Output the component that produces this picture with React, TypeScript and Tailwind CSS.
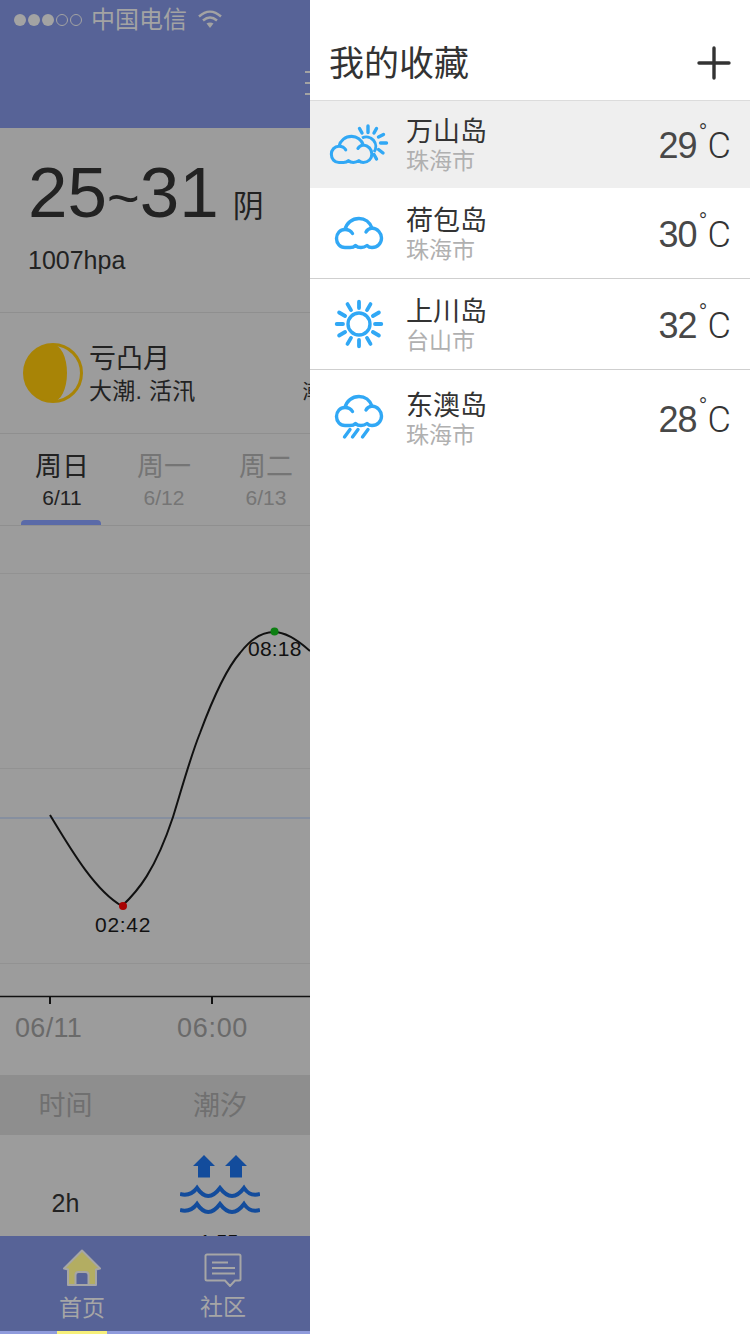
const FONT = "font-['Liberation_Sans','Noto_Sans_CJK_SC',sans-serif]";

const blue = "#31a8f5";

function CloudPath() {
  return (
    <path d="M10 30.500C5 30.500 1.500 26.500 1.500 21.500C1.500 16.500 5 12.500 10 12.500C11.500 6 17 1.500 24 1.500C30 1.500 35 5.500 37 11C42.500 11.500 46.500 16 46.500 21C46.500 26.500 42.500 30.500 37 30.500C35 30.500 33.500 30 32 28.500C30 30 28 30.500 26 30.500C24 30.500 22 30 20.500 28.500C19 30 17 30.500 15 30.500C13 30.500 11.500 30.500 10 30.500zM10 12.500C13 12.500 16 14 17.500 16.500M37 11C34 11.500 32 13 31 15" fill="none" stroke={blue} strokeWidth="3.400" strokeLinecap="round" strokeLinejoin="round" />
  );
}

function PartlyCloudy() {
  return (
    <svg width="58" height="40" viewBox="0 0 58 40" className="overflow-visible">
      <path d="M32 13A9.500 9.500 0 0 1 44 27" fill="none" stroke={blue} strokeWidth="3" />
      <g transform="translate(0 10) scale(0.9)"><CloudPath /></g>
      <g stroke={blue} strokeWidth="3.400" strokeLinecap="round">
        <path d="M29.500 3.500l2.500 4.500M38 1v6.500M46.500 3.500L44 8M53.500 9.500L48.500 12M56.500 18H50.500M53 28l-4.500-3.500M46.500 34L44 29.500" />
      </g>
    </svg>
  );
}

function Cloud() {
  return (
    <svg width="48" height="32" viewBox="0 0 48 32" className="overflow-visible">
      <CloudPath />
    </svg>
  );
}

function Sun() {
  return (
    <svg width="50" height="50" viewBox="0 0 50 50">
      <circle cx="25" cy="25" r="11" fill="none" stroke={blue} strokeWidth="3.400" />
      <g stroke={blue} strokeWidth="3.800" strokeLinecap="round">
        <path d="M25 2.700V9M25 41V47.300M2.700 25H9M41 25H47.300M36.500 5.100L33 11.100M13.500 5.100L17 11.100M36.500 44.900L33 38.900M13.500 44.900L17 38.900M44.900 13.500L38.900 17M5.100 13.500L11.100 17M44.900 36.500L38.900 33M5.100 36.500L11.100 33" />
      </g>
    </svg>
  );
}

function Rain() {
  return (
    <svg width="48" height="44" viewBox="0 0 48 44" className="-mt-[3px] overflow-visible">
      <CloudPath />
      <g stroke={blue} strokeWidth="3.400" strokeLinecap="round">
        <path d="M15 34.500L9.500 42M23 34.500L17.500 42M33 34.500L27.500 42" />
      </g>
    </svg>
  );
}

const items = [
  { name: "万山岛", city: "珠海市", temp: "29", h: "h-[87px]", bg: "bg-[#efefef]", icon: <PartlyCloudy />, border: false },
  { name: "荷包岛", city: "珠海市", temp: "30", h: "h-[91px]", bg: "bg-white", icon: <Cloud />, border: true },
  { name: "上川岛", city: "台山市", temp: "32", h: "h-[91px]", bg: "bg-white", icon: <Sun />, border: true },
  { name: "东澳岛", city: "珠海市", temp: "28", h: "h-[96px]", bg: "bg-white", icon: <Rain />, border: false },
];

function Row({ item }: { item: (typeof items)[number] }) {
  return (
    <div className={`${item.h} ${item.bg} ${item.border ? "border-b border-[#cfcfcf]" : ""} flex items-center pl-[19px] pr-[19px]`}>
      <div className="w-[60px] flex justify-center">{item.icon}</div>
      <div className="ml-[17px] mt-[4px] flex flex-col flex-1">
        <span className="text-[27px] leading-[30px] text-[#333333]">{item.name}</span>
        <span className="text-[23px] leading-[29px] text-[#b0b0b0]">{item.city}</span>
      </div>
      <div className="flex items-start mt-[3px] text-[36px] leading-[40px] text-[#484848]">
        <span className="tracking-[-1px]">{item.temp}</span>
        <span className="text-[24px] leading-[24px] -mt-[5px] ml-[2px] font-['Roboto',sans-serif] font-light text-[#333333]">°</span>
        <span className="font-['Roboto',sans-serif] font-light text-[#333333]">C</span>
      </div>
    </div>
  );
}

function Chart() {
  return (
    <svg width="310" height="549" viewBox="0 0 310 549" className="block">
      <path d="M0 47.500H310M0 242.500H310M0 437.500H310" stroke="#929292" strokeWidth="1" />
      <path d="M0 292H310" stroke="#7f8ba0" strokeWidth="1.500" />
      <path
        d="M50 289C70 322 95 365 122 380C138 365 155 345 173 291C182 262 190 232 200 207C213 172 226 143 240 127C250 114 262 106 274 106C287 106 300 116 310 125"
        fill="none"
        stroke="#111"
        strokeWidth="2"
      />
      <circle cx="123" cy="380" r="4" fill="#a80404" />
      <circle cx="274.500" cy="105.500" r="4" fill="#0d7f12" />
      <path d="M0 470.500H310" stroke="#111" strokeWidth="1.500" />
      <path d="M50 470V478M212 470V478" stroke="#111" strokeWidth="2" />
    </svg>
  );
}

export default function App() {
  return (
    <div className={`${FONT} w-[750px] h-[1334px] flex overflow-hidden bg-white`}>
      <div className="w-[310px] h-full flex flex-col bg-[#9c9c9c] overflow-hidden relative">
        <header className="h-[128px] shrink-0 bg-[#576397] flex flex-col">
          <div className="h-[40px] flex items-center pl-[14px] text-[24px] text-[#a3a3a3]">
            <div className="flex items-center gap-[2px]">
              <i className="w-[12px] h-[12px] rounded-full bg-[#a3a3a3]" />
              <i className="w-[12px] h-[12px] rounded-full bg-[#a3a3a3]" />
              <i className="w-[12px] h-[12px] rounded-full bg-[#a3a3a3]" />
              <i className="w-[12px] h-[12px] rounded-full border border-[#a3a3a3]" />
              <i className="w-[12px] h-[12px] rounded-full border border-[#a3a3a3]" />
            </div>
            <span className="ml-[9px] leading-[40px]">中国电信</span>
            <svg width="26" height="20" viewBox="0 0 26 20" className="ml-[10px] -mt-[2px]">
              <path d="M2 7.500C9 1 17 1 24 7.500M6 11.500c4.500-4 9.500-4 14 0" fill="none" stroke="#a3a3a3" strokeWidth="2.400" />
              <path d="M9.500 14.500c2-1.500 5-1.500 7 0L13 19z" fill="#a3a3a3" />
            </svg>
          </div>
          <div className="flex justify-end mt-[31px] -mr-[22px]">
            <span className="w-[27px] flex flex-col gap-[9px]">
              <i className="h-[2px] bg-[#a3a3a3]" />
              <i className="h-[2px] bg-[#a3a3a3]" />
              <i className="h-[2px] bg-[#a3a3a3]" />
            </span>
          </div>
        </header>

        <section className="h-[185px] shrink-0 border-b border-[#8f8f8f] pl-[28px] pt-[25px] text-[#222]">
          <div className="flex items-baseline h-[80px]">
            <span className="text-[71px] leading-[80px]">25<span className="text-[56px]">~</span>31</span>
            <span className="text-[31px] ml-[14px]">阴</span>
          </div>
          <div className="text-[25px] leading-[30px] mt-[12px]">1007hpa</div>
        </section>

        <section className="h-[121px] shrink-0 border-b border-[#8f8f8f] flex items-center pl-[23px] text-[#222] whitespace-nowrap">
          <svg width="60" height="60" viewBox="0 0 60 60" className="shrink-0 -mt-[1px]">
            <circle cx="30" cy="30" r="28.500" fill="none" stroke="#a88406" strokeWidth="3" />
            <path d="M30 1.500A28.500 28.500 0 0 0 30 58.500A14 28.500 0 0 0 30 1.500z" fill="#a88406" />
          </svg>
          <div className="ml-[6px] mt-[2px]">
            <div className="text-[27px] leading-[34px]">亏凸月</div>
            <div className="text-[23px] leading-[30px] tracking-[0.3px]">大潮. 活汛</div>
          </div>
          <span className="ml-[107px] mt-[37px] text-[20px] leading-[30px]">潮</span>
        </section>

        <section className="h-[92px] shrink-0 border-b border-[#8f8f8f] flex pl-[11px] relative">
          <div className="w-[102px] shrink-0 pt-[16px] flex flex-col items-center text-[#222]">
            <span className="text-[27px] leading-[34px]">周日</span>
            <span className="text-[21px] leading-[28px]">6/11</span>
          </div>
          <div className="w-[102px] shrink-0 pt-[16px] flex flex-col items-center text-[#757575]">
            <span className="text-[27px] leading-[34px]">周一</span>
            <span className="text-[21px] leading-[28px]">6/12</span>
          </div>
          <div className="w-[102px] shrink-0 pt-[16px] flex flex-col items-center text-[#757575]">
            <span className="text-[27px] leading-[34px]">周二</span>
            <span className="text-[21px] leading-[28px]">6/13</span>
          </div>
          <i className="absolute left-[21px] bottom-0 w-[80px] h-[5px] rounded-t-[4px] bg-[#5a6aa8]" />
        </section>

        <section className="h-[549px] shrink-0 relative">
          <Chart />
          <span className="absolute left-[95px] top-[387px] text-[21px] leading-[24px] tracking-[0.7px] text-[#111]">02:42</span>
          <span className="absolute left-[248px] top-[111px] text-[21px] leading-[24px] tracking-[0.2px] text-[#111]">08:18</span>
          <span className="absolute left-[15px] top-[487px] text-[27px] leading-[30px] tracking-[0.3px] text-[#6a6a6a]">06/11</span>
          <span className="absolute left-[177px] top-[487px] text-[27px] leading-[30px] tracking-[0.7px] text-[#6a6a6a]">06:00</span>
        </section>

        <section className="h-[60px] shrink-0 bg-[#8e8e8e] flex items-center text-[27px] text-[#707070] pt-[2px]">
          <span className="w-[131px] text-center">时间</span>
          <span className="w-[178px] text-center">潮汐</span>
        </section>

        <section className="h-[101px] shrink-0 flex overflow-hidden relative">
          <div className="w-[131px] flex justify-center pt-[51px] text-[25px] leading-[34px] text-[#222]">2h</div>
          <div className="w-[178px] flex flex-col items-center pt-[19px]">
            <svg width="80" height="64" viewBox="0 0 80 64" className="block shrink-0">
              <path d="M13 12L24 1 35 12H30V23.500H18V12zM45 12L56 1 67 12H62V23.500H50V12z" fill="#134c9c" strokeLinejoin="round" />
              <path d="M0 40Q10 43 17 34Q28 50 40 34Q52 50 64 34Q70 43 80 40M0 56Q10 59 17 50Q28 66 40 50Q52 66 64 50Q70 59 80 56" fill="none" stroke="#134c9c" strokeWidth="4" />
            </svg>
            <span className="shrink-0 text-[20px] leading-[22px] text-[#111] mt-[13px] -ml-[2px]">1.55</span>
          </div>
        </section>

        <footer className="h-[98px] shrink-0 bg-[#576397] flex relative text-[23px] text-[#a6a6a6]">
          <div className="w-[164px] flex flex-col items-center pt-[13px]">
            <svg width="38" height="38" viewBox="0 0 38 38" className="shrink-0">
              <path d="M19 1.500L37 19.500 33 20.500V36H5V20.500L1 19.500z" fill="#b3ad62" stroke="#a6a6a6" strokeWidth="2" strokeLinejoin="round" />
              <path d="M12.500 36V26Q12.500 23 15.500 23H22.500Q25.500 23 25.500 26V36z" fill="#576397" stroke="#a6a6a6" strokeWidth="2" />
            </svg>
            <span className="leading-[28px] mt-[7px]">首页</span>
          </div>
          <div className="w-[118px] flex flex-col items-center pt-[17px]">
            <svg width="38" height="34" viewBox="0 0 38 34" className="shrink-0">
              <path d="M3 1.500H35a1.500 1.500 0 0 1 1.500 1.500V26a1.500 1.500 0 0 1-1.500 1.500H31L26 33l-5-5.500H3A1.500 1.500 0 0 1 1.500 26V3A1.500 1.500 0 0 1 3 1.500z" fill="none" stroke="#a6a6a6" strokeWidth="2" />
              <path d="M8 9.500H24M8 15H31M8 20.500H31" stroke="#a6a6a6" strokeWidth="2" />
            </svg>
            <span className="leading-[28px] mt-[6px]">社区</span>
          </div>
          <i className="absolute left-0 right-0 bottom-0 h-[3px] bg-[#8f9bdc]" />
          <i className="absolute left-[57px] w-[50px] bottom-0 h-[3px] bg-[#f7f07a]" />
        </footer>
      </div>

      <aside className="w-[440px] h-full bg-white flex flex-col">
        <div className="h-[101px] shrink-0 flex items-center justify-between pl-[19px] pr-[19px] pt-[25px] border-b border-[#dcdcdc]">
          <span className="text-[35px] leading-[40px] text-[#333333] mt-[2px]">我的收藏</span>
          <svg width="34" height="34" viewBox="0 0 34 34">
            <path d="M17 2V32M2 17H32" stroke="#333333" strokeWidth="3.400" strokeLinecap="round" />
          </svg>
        </div>
        {items.map((item) => (
          <Row key={item.name} item={item} />
        ))}
      </aside>
    </div>
  );
}
